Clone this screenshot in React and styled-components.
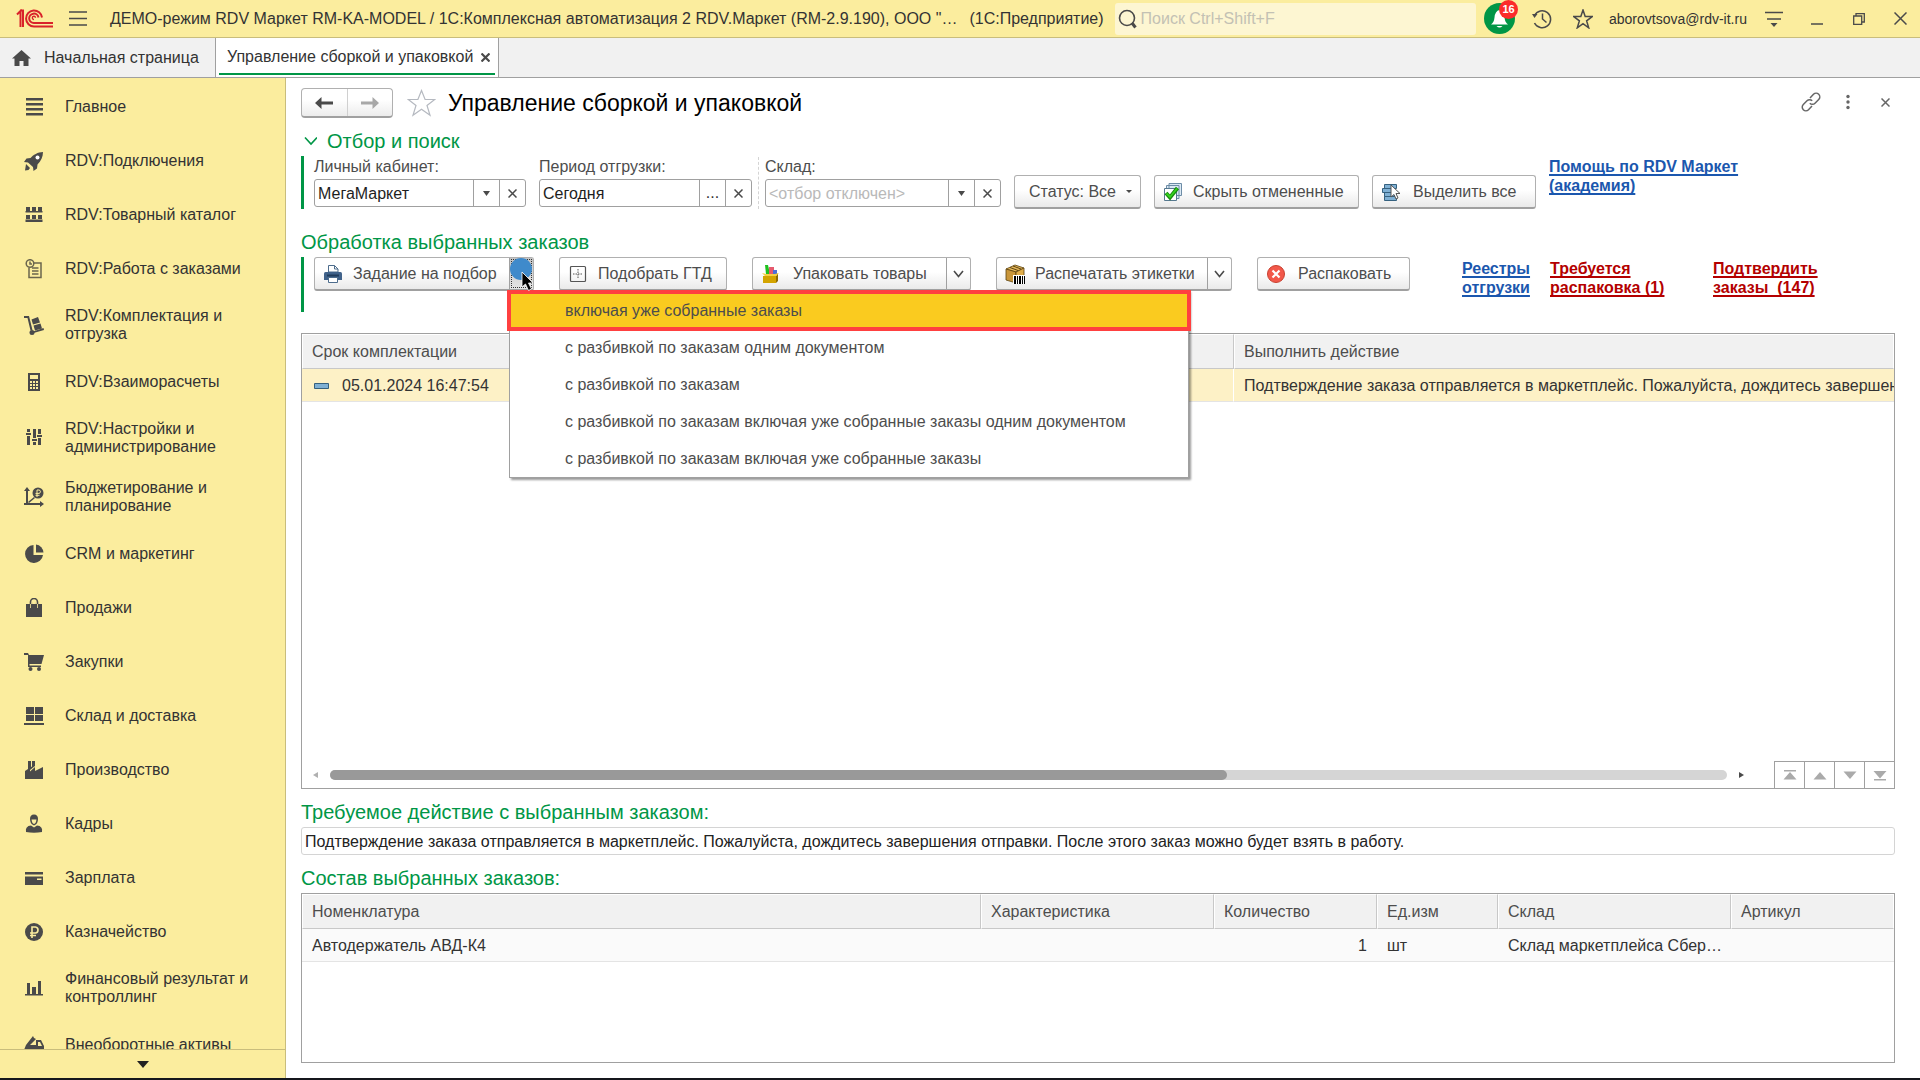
import React from "react";
import styled, { createGlobalStyle } from "styled-components";

const GlobalStyle = createGlobalStyle`
  *, *::before, *::after { box-sizing: border-box; }
  body { margin: 0; background: #fff; }
  body, button, input { font-family: "Liberation Sans", Arial, sans-serif; font-size: 16px; line-height: 18px; color: #333; }
  button { background: none; border: 0; padding: 0; margin: 0; cursor: pointer; }
  svg { display: block; flex-shrink: 0; }
`;

/* ---------- shell ---------- */
const Shell = styled.div`
  display: flex;
  flex-direction: column;
  height: 100vh;
  overflow: hidden;
  border-bottom: 2px solid #15171c;
`;
const TopBar = styled.header`
  display: flex;
  align-items: center;
  flex-shrink: 0;
  height: 38px;
  padding: 0 13px 0 16px;
  background: #fbed9e;
  border-bottom: 1px solid #c9bd7c;
`;
const MenuButton = styled.button`
  margin: 0 23px 0 16px;
`;
const AppTitle = styled.div`
  flex-shrink: 0;
  white-space: nowrap;
`;
const Platform = styled.div`
  margin: 0 11px 0 12px;
  white-space: nowrap;
`;
const SearchBox = styled.label`
  display: flex;
  align-items: center;
  gap: 4px;
  flex: 1 1 0;
  min-width: 0;
  height: 32px;
  padding-left: 2px;
  background: #fdf6d2;
  border-radius: 3px;
`;
const SearchInput = styled.input`
  flex: 1;
  min-width: 0;
  padding: 0;
  border: 0;
  outline: 0;
  background: transparent;
  &::placeholder { color: #c3c1b4; opacity: 1; }
`;
const TopActions = styled.div`
  display: flex;
  align-items: center;
  margin-left: 8px;
`;
const Bell = styled.button`
  position: relative;
  margin-right: 17px;
`;
const Badge = styled.span`
  position: absolute;
  top: -3px;
  right: -3px;
  width: 19px;
  height: 19px;
  border-radius: 50%;
  background: #fb2b2b;
  color: #fff;
  font-size: 11px;
  font-weight: bold;
  line-height: 19px;
  text-align: center;
`;
const TopIcon = styled.button`
  margin-right: ${(p) => p.$gap || 0}px;
`;
const UserName = styled.div`
  width: 142px;
  margin-right: 14px;
  font-size: 14px;
  white-space: nowrap;
`;

const TabBar = styled.nav`
  display: flex;
  flex-shrink: 0;
  height: 40px;
  background: #f1f1f1;
  border-bottom: 1px solid #a0a0a0;
`;
const HomeTab = styled.button`
  display: flex;
  align-items: center;
  gap: 13px;
  width: 215px;
  padding-left: 12px;
`;
const ActiveTab = styled.div`
  display: flex;
  padding: 0 3px 2px;
  background: #fff;
  border: solid #a0a0a0;
  border-width: 0 1px;
`;
const ActiveTabInner = styled.div`
  display: flex;
  align-items: center;
  gap: 8px;
  padding: 3px 5px 0 8px;
  border-bottom: 2px solid #009646;
`;

const Body = styled.div`
  display: flex;
  flex: 1;
  min-height: 0;
`;

/* ---------- sidebar ---------- */
const Sidebar = styled.aside`
  display: flex;
  flex-direction: column;
  width: 286px;
  flex-shrink: 0;
  background: #fbed9e;
  border-right: 1px solid #c9bd7c;
`;
const NavList = styled.nav`
  display: flex;
  flex-direction: column;
  flex: 1;
  min-height: 0;
  padding-top: 1px;
  overflow: hidden;
`;
const NavItem = styled.button`
  display: flex;
  align-items: center;
  gap: 21px;
  flex-shrink: 0;
  min-height: 54px;
  padding: 12px 24px 11px;
  text-align: left;
`;
const NavMore = styled.button`
  display: flex;
  align-items: center;
  justify-content: center;
  height: 29px;
  flex-shrink: 0;
  border-top: 1px solid #c9bd7c;
`;

/* ---------- main ---------- */
const Main = styled.main`
  display: flex;
  flex-direction: column;
  flex: 1;
  min-width: 0;
  padding: 10px 25px 15px 15px;
`;
const TitleRow = styled.div`
  display: flex;
  align-items: center;
  flex-shrink: 0;
  height: 30px;
`;
const History = styled.div`
  display: flex;
  width: 92px;
  height: 30px;
  border: 1px solid #b0b0b0;
  border-bottom: 2px solid #a0a0a0;
  border-radius: 4px;
  background: linear-gradient(#fff 40%, #ececec);
`;
const HistoryButton = styled.button`
  display: flex;
  flex: 1;
  align-items: center;
  justify-content: center;
  & + & { border-left: 1px solid #d0d0d0; }
`;
const FavButton = styled.button`
  margin: 0 12px 0 14px;
`;
const PageTitle = styled.h1`
  flex: 1;
  margin: 0;
  color: #000;
  font-size: 23px;
  font-weight: normal;
  line-height: 30px;
  white-space: nowrap;
`;
const TitleActions = styled.div`
  display: flex;
  align-items: center;
  gap: 17px;
  padding-bottom: 2px;
`;
const TitleAction = styled.button`
  display: flex;
  justify-content: center;
  width: 20px;
`;
const Heading = styled.h2`
  display: flex;
  align-items: center;
  gap: 10px;
  flex-shrink: 0;
  margin: ${(p) => p.$top}px 0 3px;
  color: #009646;
  font-size: 20px;
  font-weight: normal;
  line-height: 24px;
  white-space: nowrap;
`;
const Group = styled.section`
  display: flex;
  align-items: ${(p) => p.$align};
  gap: ${(p) => p.$gap}px;
  flex-shrink: 0;
  height: ${(p) => p.$height}px;
  padding-left: 10px;
  border-left: 3px solid #009646;
`;
const FieldPair = styled.div`
  display: flex;
  gap: 6px;
`;
const Divider = styled.div`
  border-left: 1px dashed #d4d4d4;
`;
const Field = styled.div`
  display: flex;
  flex-direction: column;
  gap: 3px;
  width: ${(p) => p.$width}px;
  height: 52px;
  padding-top: 1px;
`;
const FieldLabel = styled.label`
  color: #4d4d4d;
`;
const FieldBox = styled.div`
  display: flex;
  height: 28px;
  border: 1px solid #a0a0a0;
  border-radius: 3px;
`;
const FieldInput = styled.input`
  flex: 1;
  min-width: 0;
  padding: 1px 3px 0;
  border: 0;
  outline: 0;
  background: transparent;
  color: #1e1e1e;
  &::placeholder { color: #b9b9b9; opacity: 1; }
`;
const FieldButton = styled.button`
  display: flex;
  align-items: center;
  justify-content: center;
  width: 26px;
  border-left: 1px solid #a0a0a0;
`;

const raised = `
  border: 1px solid #b0b0b0;
  border-bottom: 2px solid #a0a0a0;
  border-radius: 3px;
  background: linear-gradient(#fff 45%, #eaeaea);
`;
const Button = styled.button`
  ${raised}
  display: flex;
  align-items: center;
  gap: ${(p) => p.$gap || 10}px;
  flex-shrink: 0;
  width: ${(p) => p.$width}px;
  height: 34px;
  padding: 0 8px;
  color: #4d4d4d;
  white-space: nowrap;
`;
const StatusButton = styled(Button)`
  justify-content: flex-end;
`;
const Split = styled.div`
  ${raised}
  display: flex;
  flex-shrink: 0;
  height: 34px;
`;
const SplitMain = styled.button`
  display: flex;
  align-items: center;
  gap: ${(p) => p.$gap || 10}px;
  width: ${(p) => p.$width}px;
  padding: 0 8px;
  color: #4d4d4d;
  white-space: nowrap;
`;
const SplitMore = styled.div`
  position: relative;
  display: flex;
  width: 24px;
  border-left: 1px solid #a0a0a0;
  background: ${(p) => (p.$open ? "linear-gradient(#c4c4c4, #e4e4e4)" : "none")};
`;
const SplitArrow = styled.button`
  display: flex;
  flex: 1;
  align-items: center;
  justify-content: center;
  margin: ${(p) => (p.$open ? 2 : 0)}px;
  outline: ${(p) => (p.$open ? "1px dotted #333" : "none")};
`;
const ClickMark = styled.div`
  position: absolute;
  top: 0;
  left: 0;
  z-index: 3;
  pointer-events: none;
`;

const Menu = styled.div`
  position: absolute;
  top: calc(100% + 1px);
  left: -1px;
  z-index: 2;
  display: flex;
  flex-direction: column;
  width: 680px;
  border: 1px solid #a0a0a0;
  background: #fff;
  box-shadow: 2px 2px 2px rgba(0, 0, 0, 0.4);
`;
const MenuItem = styled.button`
  height: 37px;
  padding: 0 55px;
  color: #4d4d4d;
  text-align: left;
  white-space: nowrap;
`;
const MarkedMenuItem = styled(MenuItem)`
  position: relative;
  height: 41px;
  margin: -1px -3px -2px;
  padding: 0 54px;
  border: 4px solid #ff4040;
  background: #facb1f;
`;

const TextLink = styled.a`
  width: ${(p) => p.$width}px;
  color: ${(p) => (p.$alert ? "#b40000" : "#1b57ae")};
  font-weight: bold;
  line-height: 19px;
  text-decoration: underline;
  text-decoration-thickness: 2px;
  text-decoration-skip-ink: none;
  text-underline-offset: 2px;
`;
const HelpLink = styled(TextLink)`
  align-self: flex-start;
  flex-shrink: 0;
  padding-top: 1px;
`;
const LinkRow = styled.div`
  display: flex;
  margin-left: 27px;
  padding-top: 2px;
`;

/* ---------- tables ---------- */
const OrdersFrame = styled.section`
  display: flex;
  flex-direction: column;
  justify-content: space-between;
  flex: 1;
  min-height: 0;
  margin-top: 21px;
  border: 1px solid #a0a0a0;
`;
const ItemsFrame = styled.section`
  flex-shrink: 0;
  height: 170px;
  border: 1px solid #a0a0a0;
`;
const Table = styled.table`
  width: 100%;
  table-layout: fixed;
  border-collapse: separate;
  border-spacing: 0;
`;
const Col = styled.col`
  width: ${(p) => p.$width};
`;
const Th = styled.th`
  height: 35px;
  padding: 0 9px;
  border: 1px solid #fff;
  border-bottom: 1px solid #c8c8c8;
  border-right: 1px solid #c8c8c8;
  background: #f1f1f1;
  color: #4d4d4d;
  font-weight: normal;
  text-align: left;
  &:last-child { border-right-color: #fff; }
`;
const Td = styled.td`
  height: 33px;
  padding: 1px ${(p) => (p.$clip ? 0 : 10)}px 0 10px;
  overflow: hidden;
  border-bottom: 1px solid #e4e4e4;
  background: ${(p) => (p.$selected ? "#fdf1c6" : "#fafafa")};
  border-right: ${(p) => (p.$selected && !p.$clip ? "1px solid #fff" : "0")};
  text-align: ${(p) => (p.$right ? "right" : "left")};
  white-space: nowrap;
`;
const DateCell = styled.div`
  display: flex;
  align-items: center;
  gap: 12px;
  padding-left: 2px;
`;
const ScrollRow = styled.div`
  display: flex;
  align-items: center;
  height: 27px;
  padding-left: 11px;
`;
const Track = styled.div`
  flex: 1;
  height: 10px;
  margin: 0 11px;
  border-radius: 5px;
  background: #d5d5d5;
`;
const Thumb = styled.div`
  width: 64.2%;
  height: 10px;
  border-radius: 5px;
  background: #999;
`;
const Pager = styled.div`
  display: flex;
  height: 27px;
  margin-left: 30px;
  border-top: 1px solid #a0a0a0;
`;
const PagerButton = styled.button`
  display: flex;
  align-items: center;
  justify-content: center;
  width: 30px;
  border-left: 1px solid #a0a0a0;
`;
const ActionField = styled.input`
  flex-shrink: 0;
  width: 100%;
  height: 28px;
  padding: 1px 3px 0;
  border: 1px solid #d4d4d4;
  border-radius: 3px;
  outline: 0;
  color: #222;
`;

/* ---------- icons ---------- */
const Glyph = ({ size = 20, w, h, children, color = "#4a4a4a", line }) => (
  <svg width={w || size} height={h || size} viewBox={`0 0 ${w || size} ${h || size}`}
    fill={line ? "none" : color} stroke={line ? color : "none"} strokeWidth={line || 1} aria-hidden="true">
    {children}
  </svg>
);
const Cross = ({ size = 9, line = 1.5, color = "#4a4a4a" }) => (
  <Glyph size={size} line={line} color={color}><path d={`M0.5 0.5L${size - 0.5} ${size - 0.5}M${size - 0.5} 0.5L0.5 ${size - 0.5}`} /></Glyph>
);
const Caret = () => <Glyph w={7} h={5}><path d="M0 0h7L3.5 5z" /></Glyph>;
const SmallCaret = () => <Glyph w={6} h={3}><path d="M0 0h6L3 3z" /></Glyph>;
const Chevron = () => <Glyph w={11} h={8} line={1.6}><path d="M1 1l4.5 5.5L10 1" /></Glyph>;

const Logo = () => (
  <Glyph w={37} h={19} line={2} color="#d9222a">
    <path d="M1 5.5L4.5 2V18M4 1.5H7V18" />
    <path d="M26 8.5A8 8 0 1 0 18 17.5H37" />
    <path d="M22.5 8.5a4.7 4.7 0 1 0-4.5 5.5H37" />
    <path d="M19.5 8.8a1.6 1.6 0 1 0-1.5 1.7" strokeWidth="1.4" />
  </Glyph>
);

const icons = {
  list: <path d="M2 1h17v2.500H2zM2 6h17v2.500H2zM2 11h17v2.500H2zM2 16h17v2.500H2z" />,
  rocket: (
    <>
      <path d="M19 1C14 1 9 4 6.500 7L2.500 7.500 0 11l4 .5L9 16l.5 4 3.500-2.500.5-4C17 10 19 6 19 1z" />
      <path d="M2 13l4 4-1.500 2-3.500.5z" />
      <circle cx="13.500" cy="6.500" r="2" fill="#fff" />
    </>
  ),
  shelves: (
    <>
      <path d="M2 2h4v4H2zM8 2h4v4H8zM14 2h4v4h-4zM2 10h4v4H2zM8 10h4v4H8zM14 10h4v4h-4z" />
      <path d="M1.500 6h17v1.500h-17zM1.500 14.500h17V17h-17z" />
    </>
  ),
  orders: (
    <g fill="none" stroke="#6b664e" strokeWidth="1.500">
      <circle cx="6" cy="4.500" r="3.800" /><path d="M6 2.500v2.500h2" />
      <path d="M10 4h7v14.500H5V9M8 9h6.500M8 12h6.500M8 15h6.500" />
    </g>
  ),
  trolley: (
    <>
      <path d="M0 1h5l3.500 14-2 .5L3.500 3H0z" />
      <path d="M7.500 4.500l6.500-2.500 2 5.500-7 2zM9.500 10.500l7-2 1.500 5-7 2z" />
      <circle cx="8" cy="17.500" r="2.500" /><path d="M9 16.500l10.500-3.500.5 2-10.500 3z" />
    </>
  ),
  calculator: <path fillRule="evenodd" d="M4 1h12v18H4zM6 3h8v4H6zM6 9h2v2H6zM9 9h2v2H9zM12 9h2v2h-2zM6 12h2v2H6zM9 12h2v2H9zM12 12h2v2h-2zM6 15h2v2H6zM9 15h2v2H9zM12 15h2v2h-2z" />,
  sliders: <path d="M3 1h3v3H3zM2 5h5v2H2zM3 8h3v9H3zM9 1h3v9H9zM8 11h5v2H8zM9 14h3v3H9zM14 1h3v5h-3zM13 7h5v2h-5zM14 10h3v7h-3z" />,
  budget: (
    <>
      <path d="M3 0l3 4H4v12h12v-2l4 3-4 3v-2H0v-2h2V4H0z" />
      <path d="M4 15l6-5 1 1-6 5z" />
      <circle cx="14" cy="6" r="5.500" />
      <path d="M13 10V3h2.500q2 1.700 0 3.400H11.500M11.500 8.300h4" fill="none" stroke="#fbed9e" />
    </>
  ),
  pie: (
    <>
      <path d="M9.500 1A9 9 0 1 0 19 11H9.500z" />
      <path d="M12 0.500A8.500 8.500 0 0 1 19.500 8.500H12z" />
    </>
  ),
  bag: (
    <>
      <path d="M2 6h16v13H2z" />
      <path d="M6.500 9V4a3.500 3.500 0 0 1 7 0v5" fill="none" stroke="#4a4a4a" strokeWidth="1.600" />
      <path d="M8 6V4.500M12 6V4.500M6.500 6v4M13.500 6v4" stroke="#d8cc8c" />
    </>
  ),
  cart: (
    <>
      <path d="M0 1h4l1 2h15l-2.500 9H5.500v1.500H17V15H4V3H0z" />
      <circle cx="6.500" cy="17" r="2" /><circle cx="15" cy="17" r="2" />
    </>
  ),
  warehouse: <path d="M2 1h8v7H2zM11 1h8v7h-8zM2 9h8v6H2zM11 9h8v6h-8zM0 17h20v2H0z" />,
  factory: <path d="M1 19v-8l3-2V1h3v6l1-.5V1h3v5l-5 4v1.500L11 7v4l8-4v12z" />,
  person: (
    <>
      <path d="M6 5q0-4.500 4-4.500T14 5q0 5-4 6.500Q6 10 6 5z" />
      <path d="M2 18q-1-6 5-6.500l3 2 3-2q6 .5 5 6.500-8 1.500-16 0z" />
      <path d="M7.500 5.500h5q-.5 4-2.500 4.500-2-.5-2.500-4.500z" fill="#fbed9e" />
    </>
  ),
  card: <path fillRule="evenodd" d="M1 4h18v2.500H1zM1 8.500h18V17H1zM13 10.500h4.500V12H13z" />,
  ruble: (
    <>
      <circle cx="10" cy="10" r="9" />
      <path d="M8 16V5h3.500q2.500.3 2.500 3t-2.500 3H6M6 13.500h6" fill="none" stroke="#fbed9e" strokeWidth="1.600" />
    </>
  ),
  bars: <path d="M3 5h3v11H3zM8 9h4v7H8zM14 3h3v13h-3zM1 16h18v1.500H1z" />,
  truck: (
    <>
      <path fillRule="evenodd" d="M0 15l2-5 7-9 1 2 2 1-6 6h6V5h5l3 6v7h-2a3 3 0 0 0-6 0H8a3 3 0 0 0-6 0H0zM14 7v4h4l-2-4z" />
      <circle cx="5" cy="18" r="2" /><circle cx="15" cy="18" r="2" />
    </>
  ),
};

const PrinterIcon = () => (
  <Glyph size={20}>
    <path d="M5.500 8V1.500h6L15 5v3z" fill="#fff" stroke="#4d6c8c" />
    <path d="M11.500 1.500V5H15" fill="none" stroke="#4d6c8c" />
    <path d="M1 9.500Q1 8 2.500 8h15Q19 8 19 9.500V16H1z" fill="#40628a" />
    <path d="M4 11.500h12" stroke="#203c5c" strokeWidth="2" />
    <path d="M5.500 13.500h9v5h-9z" fill="#fff" stroke="#4d6c8c" />
  </Glyph>
);
const GridIcon = () => (
  <Glyph size={20} line={1.2} color="#555">
    <rect x="2.500" y="2.500" width="15" height="15" rx="1" />
    <path d="M10 5v10M5 10h10" strokeWidth="1" strokeDasharray="1.500 1" />
  </Glyph>
);
const BoxOpenIcon = () => (
  <Glyph size={20}>
    <path d="M4 1h3l2 9H5z" fill="#1fc21f" /><path d="M8 3h5v7H8z" fill="#e65a6e" /><path d="M12 6h4v5h-4z" fill="#4a6fd8" />
    <path d="M2 12h13v7H2z" fill="#d3a400" /><path d="M15 12l2-3v8l-2 2z" fill="#8f6c00" />
    <path d="M1 9l3 3h11l3-3-4 1H5z" fill="#f5d042" />
  </Glyph>
);
const ParcelIcon = () => (
  <Glyph size={20}>
    <path d="M1 5l9-4 9 3-8 4z" fill="#e5b85a" stroke="#5c4210" strokeWidth=".8" />
    <path d="M1 5l10 3v11L1 16z" fill="#c9963a" stroke="#5c4210" strokeWidth=".8" />
    <path d="M11 8l8-4v10l-8 5z" fill="#e0ad4a" stroke="#5c4210" strokeWidth=".8" />
    <path d="M5 3.500l8 3M8 2l8 3" stroke="#5c4210" />
    <path d="M8 11h12v9H8z" fill="#fff" />
    <path d="M9 12h2v8H9zM12 12h1v8h-1zM14 12h2v8h-2zM17 12h1v8h-1zM19 12h1v8h-1z" fill="#000" />
  </Glyph>
);
const CancelIcon = () => (
  <Glyph size={20}>
    <circle cx="10" cy="10" r="8.500" fill="#f2584a" stroke="#c8402f" />
    <path d="M6.500 6.500l7 7M13.500 6.500l-7 7" stroke="#fff" strokeWidth="2.200" />
  </Glyph>
);
const CheckPagesIcon = () => (
  <Glyph size={20}>
    <path d="M6 1.500h12.500v12H6zM3.500 3.500H16v13H3.500z" fill="#dbe9f4" stroke="#6d8ca6" />
    <path d="M1.500 6.500h12v12h-12z" fill="#fff" stroke="#56788f" />
    <path d="M3 11l4 4.500L14.500 6" fill="none" stroke="#188a10" strokeWidth="4" />
    <path d="M3.500 11.500l3.500 3.500 7-8.500" fill="none" stroke="#35d41f" strokeWidth="1.800" />
  </Glyph>
);
const SelectAllIcon = () => (
  <Glyph size={20}>
    <path d="M3.500 2.500h12v4h-12zM1.500 6.500h12v4h-12zM3.500 10.500h12v4h-12zM3.500 14.500h12v4h-12z" fill="#7fb0d4" stroke="#35617f" />
    <path d="M10 3v12l3-2.500 2 4.500 2-1-2-4.500h4z" fill="#fff" stroke="#555" />
  </Glyph>
);

/* ---------- data ---------- */
const sections = [
  ["list", "Главное"],
  ["rocket", "RDV:Подключения"],
  ["shelves", "RDV:Товарный каталог"],
  ["orders", "RDV:Работа с заказами"],
  ["trolley", "RDV:Комплектация и отгрузка"],
  ["calculator", "RDV:Взаиморасчеты"],
  ["sliders", "RDV:Настройки и администрирование"],
  ["budget", "Бюджетирование и планирование"],
  ["pie", "CRM и маркетинг"],
  ["bag", "Продажи"],
  ["cart", "Закупки"],
  ["warehouse", "Склад и доставка"],
  ["factory", "Производство"],
  ["person", "Кадры"],
  ["card", "Зарплата"],
  ["ruble", "Казначейство"],
  ["bars", "Финансовый результат и контроллинг"],
  ["truck", "Внеоборотные активы"],
];
const pickOptions = [
  "с разбивкой по заказам одним документом",
  "с разбивкой по заказам",
  "с разбивкой по заказам включая уже собранные заказы одним документом",
  "с разбивкой по заказам включая уже собранные заказы",
];
const itemColumns = [
  ["Номенклатура", "679px"],
  ["Характеристика", "233px"],
  ["Количество", "163px"],
  ["Ед.изм", "121px"],
  ["Склад", "233px"],
  ["Артикул", "auto"],
];
const actionText =
  "Подтверждение заказа отправляется в маркетплейс. Пожалуйста, дождитесь завершения отправки. После этого заказ можно будет взять в работу.";
const pagerPaths = [
  ["В начало", "M1 0h12v1.500H1zM7 2l6.500 7.500H.5z"],
  ["Вверх", "M7 2l6.500 7.500H.5z"],
  ["Вниз", "M.5 1.500h13L7 9z"],
  ["В конец", "M.5 1h13L7 8.500zM1 9h12v1.500H1z"],
];

const FilterField = ({ id, label, width, value, placeholder, picker }) => (
  <Field $width={width}>
    <FieldLabel htmlFor={id}>{label}</FieldLabel>
    <FieldBox>
      <FieldInput id={id} defaultValue={value} placeholder={placeholder} />
      <FieldButton aria-label="Выбрать">{picker || <Caret />}</FieldButton>
      <FieldButton aria-label="Очистить"><Cross /></FieldButton>
    </FieldBox>
  </Field>
);

export default function App() {
  return (
    <Shell>
      <GlobalStyle />
      <TopBar>
        <Logo />
        <MenuButton aria-label="Меню">
          <Glyph w={18} h={15} line={1.5}><path d="M0 1h18M0 7.500h18M0 14h18" /></Glyph>
        </MenuButton>
        <AppTitle>
          ДЕМО-режим RDV Маркет RM-KA-MODEL / 1С:Комплексная автоматизация 2 RDV.Маркет (RM-2.9.190), ООО "…
        </AppTitle>
        <Platform>(1С:Предприятие)</Platform>
        <SearchBox>
          <Glyph w={20} h={22} line={1.6}><circle cx="10" cy="10" r="7.500" /><path d="M15 15l3.500 4.500" strokeWidth="3" /></Glyph>
          <SearchInput aria-label="Поиск" placeholder="Поиск Ctrl+Shift+F" />
        </SearchBox>
        <TopActions>
          <Bell aria-label="Уведомления">
            <Glyph size={31}>
              <circle cx="15.500" cy="15.500" r="15.500" fill="#009646" />
              <path d="M7 21.500q3-2 3.500-7Q11 8 15.500 7q4.500 1 5 7.500.5 5 3.500 7zM12.500 23h6q-3 3-6 0z" fill="#fff" />
            </Glyph>
            <Badge>16</Badge>
          </Bell>
          <TopIcon $gap={21} aria-label="История">
            <Glyph size={20} line={1.5}><path d="M2.500 6.500A8.500 8.500 0 1 1 2.500 14M10.500 4.500V10l4 3.500" /><path d="M0 5h5.500L2.500 9z" fill="#4a4a4a" stroke="none" /></Glyph>
          </TopIcon>
          <TopIcon $gap={16} aria-label="Избранное">
            <Glyph size={20} line={1.5}><path d="M10 1l2.200 6.600h7l-5.600 4.200 2.100 7-5.700-4.200-5.700 4.200 2.100-7L.8 7.600h7z" /></Glyph>
          </TopIcon>
          <UserName>aborovtsova@rdv-it.ru</UserName>
          <TopIcon $gap={28} aria-label="Настройки">
            <Glyph w={18} h={18} line={1.5}><path d="M0 2.500h18M2 9h14" /><path d="M5.500 13h7L9 17z" fill="#4a4a4a" stroke="none" /></Glyph>
          </TopIcon>
          <TopIcon $gap={30} aria-label="Свернуть"><Glyph w={12} h={12} line={1.5}><path d="M0 11h12" /></Glyph></TopIcon>
          <TopIcon $gap={29} aria-label="Восстановить"><Glyph w={12} h={12} line={1.3}><path d="M.7 3h8v8.300h-8zM3 3V.7h8.300V9H9" /></Glyph></TopIcon>
          <TopIcon aria-label="Закрыть"><Cross size={13} /></TopIcon>
        </TopActions>
      </TopBar>

      <TabBar>
        <HomeTab>
          <Glyph w={19} h={16}><path d="M9.500 0L19 8.500h-2.500V16h-5v-5h-4v5h-5V8.500H0z" /></Glyph>
          Начальная страница
        </HomeTab>
        <ActiveTab>
          <ActiveTabInner>
            Управление сборкой и упаковкой
            <button aria-label="Закрыть вкладку"><Cross line={2.2} /></button>
          </ActiveTabInner>
        </ActiveTab>
      </TabBar>

      <Body>
        <Sidebar>
          <NavList>
            {sections.map(([icon, label]) => (
              <NavItem key={label}>
                <Glyph size={20}>{icons[icon]}</Glyph>
                <span>{label}</span>
              </NavItem>
            ))}
          </NavList>
          <NavMore aria-label="Ещё разделы"><Glyph w={12} h={7} color="#222"><path d="M0 0h12L6 7z" /></Glyph></NavMore>
        </Sidebar>

        <Main>
          <TitleRow>
            <History>
              <HistoryButton aria-label="Назад"><Glyph w={18} h={12}><path d="M0 6l6.500-6v4.500H18v3H6.500V12z" /></Glyph></HistoryButton>
              <HistoryButton aria-label="Вперед"><Glyph w={18} h={12} color="#a8a8a8"><path d="M18 6L11.500 0v4.500H0v3h11.500V12z" /></Glyph></HistoryButton>
            </History>
            <FavButton aria-label="В избранное">
              <Glyph size={29} line={1.2} color="#b5b9c0"><path d="M14.500 1.500l3.600 9h9.600l-7.700 6 3 9.700-8.500-5.900L6 26.200l3-9.700-7.700-6h9.600z" /></Glyph>
            </FavButton>
            <PageTitle>Управление сборкой и упаковкой</PageTitle>
            <TitleActions>
              <TitleAction aria-label="Ссылка">
                <Glyph size={20} line={1.5} color="#666">
                  <path d="M9 6l3.500-3.700a3.600 3.600 0 0 1 5.200 5.200L14 11.200a3.600 3.600 0 0 1-5.200 0M11 14l-3.500 3.700a3.600 3.600 0 0 1-5.200-5.200L6 8.800a3.600 3.600 0 0 1 5.200 0" />
                </Glyph>
              </TitleAction>
              <TitleAction aria-label="Ещё">
                <Glyph w={8} h={16} color="#666"><circle cx="4" cy="2.500" r="1.700" /><circle cx="4" cy="8" r="1.700" /><circle cx="4" cy="13.500" r="1.700" /></Glyph>
              </TitleAction>
              <TitleAction aria-label="Закрыть"><Cross color="#666" /></TitleAction>
            </TitleActions>
          </TitleRow>

          <Heading $top={11}>
            <Glyph w={16} h={10} line={1.6} color="#009646"><path d="M4 1.500l6 6.500 6-6.500" /></Glyph>
            Отбор и поиск
          </Heading>
          <Group $align="flex-end" $gap={13} $height={53}>
            <FilterField id="account" label="Личный кабинет:" width={212} value="МегаМаркет" />
            <FieldPair>
              <FilterField id="period" label="Период отгрузки:" width={213} value="Сегодня" picker="..." />
              <Divider />
              <FilterField id="stock" label="Склад:" width={236} placeholder="<отбор отключен>" />
            </FieldPair>
            <StatusButton $width={127}>Статус: Все <SmallCaret /></StatusButton>
            <Button $width={205}><CheckPagesIcon />Скрыть отмененные</Button>
            <Button $width={164} $gap={12}><SelectAllIcon />Выделить все</Button>
            <HelpLink $width={200} href="#help">Помощь по RDV Маркет<br />(академия)</HelpLink>
          </Group>

          <Heading $top={21}>Обработка выбранных заказов</Heading>
          <Group $align="flex-start" $gap={25} $height={55}>
            <Split>
              <SplitMain $width={194}><PrinterIcon />Задание на подбор</SplitMain>
              <SplitMore $open>
                <SplitArrow $open aria-label="Варианты задания" aria-expanded="true" />
                <ClickMark>
                  <Glyph w={28} h={34}>
                    <circle cx="11" cy="11" r="11" fill="#3f8acb" />
                    <path d="M12 14v15l3.500-3 3 6.500 3-1.500-3-6H23z" fill="#000" stroke="#fff" strokeWidth=".8" />
                  </Glyph>
                </ClickMark>
                <Menu>
                  <MarkedMenuItem>включая уже собранные заказы</MarkedMenuItem>
                  {pickOptions.map((option) => <MenuItem key={option}>{option}</MenuItem>)}
                </Menu>
              </SplitMore>
            </Split>
            <Button $width={168}><GridIcon />Подобрать ГТД</Button>
            <Split>
              <SplitMain $width={193} $gap={12}><BoxOpenIcon />Упаковать товары</SplitMain>
              <SplitMore><SplitArrow aria-label="Варианты упаковки"><Chevron /></SplitArrow></SplitMore>
            </Split>
            <Split>
              <SplitMain $width={210}><ParcelIcon />Распечатать этикетки</SplitMain>
              <SplitMore><SplitArrow aria-label="Варианты печати"><Chevron /></SplitArrow></SplitMore>
            </Split>
            <Button $width={153} $gap={12}><CancelIcon />Распаковать</Button>
            <LinkRow>
              <TextLink $width={88} href="#registers">Реестры<br />отгрузки</TextLink>
              <TextLink $alert $width={163} href="#unpack">Требуется<br />распаковка (1)</TextLink>
              <TextLink $alert $width={120} href="#confirm">Подтвердить<br />{"заказы \u00a0(147)"}</TextLink>
            </LinkRow>
          </Group>

          <OrdersFrame>
            <Table>
              <colgroup><Col $width="932px" /><Col $width="auto" /></colgroup>
              <thead><tr><Th>Срок комплектации</Th><Th>Выполнить действие</Th></tr></thead>
              <tbody>
                <tr>
                  <Td $selected>
                    <DateCell>
                      <Glyph w={16} h={6}><path d="M.5 .5h14v5H.5z" fill="#7fb0d4" stroke="#35617f" /></Glyph>
                      05.01.2024 16:47:54
                    </DateCell>
                  </Td>
                  <Td $selected $clip>{actionText}</Td>
                </tr>
              </tbody>
            </Table>
            <ScrollRow>
              <Glyph w={6} h={6} color="#b0b0b0"><path d="M5 0v6L0 3z" /></Glyph>
              <Track><Thumb /></Track>
              <Glyph w={6} h={6}><path d="M1 0v6l5-3z" /></Glyph>
              <Pager>
                {pagerPaths.map(([label, d]) => (
                  <PagerButton key={label} aria-label={label}><Glyph w={14} h={11} color="#aaa"><path d={d} /></Glyph></PagerButton>
                ))}
              </Pager>
            </ScrollRow>
          </OrdersFrame>

          <Heading $top={11} as="label" htmlFor="required-action">Требуемое действие с выбранным заказом:</Heading>
          <ActionField id="required-action" readOnly value={actionText} />

          <Heading $top={11}>Состав выбранных заказов:</Heading>
          <ItemsFrame>
            <Table>
              <colgroup>{itemColumns.map(([name, width]) => <Col key={name} $width={width} />)}</colgroup>
              <thead><tr>{itemColumns.map(([name]) => <Th key={name}>{name}</Th>)}</tr></thead>
              <tbody>
                <tr>
                  <Td>Автодержатель АВД-К4</Td>
                  <Td />
                  <Td $right>1</Td>
                  <Td>шт</Td>
                  <Td>Склад маркетплейса Сбер…</Td>
                  <Td />
                </tr>
              </tbody>
            </Table>
          </ItemsFrame>
        </Main>
      </Body>
    </Shell>
  );
}
